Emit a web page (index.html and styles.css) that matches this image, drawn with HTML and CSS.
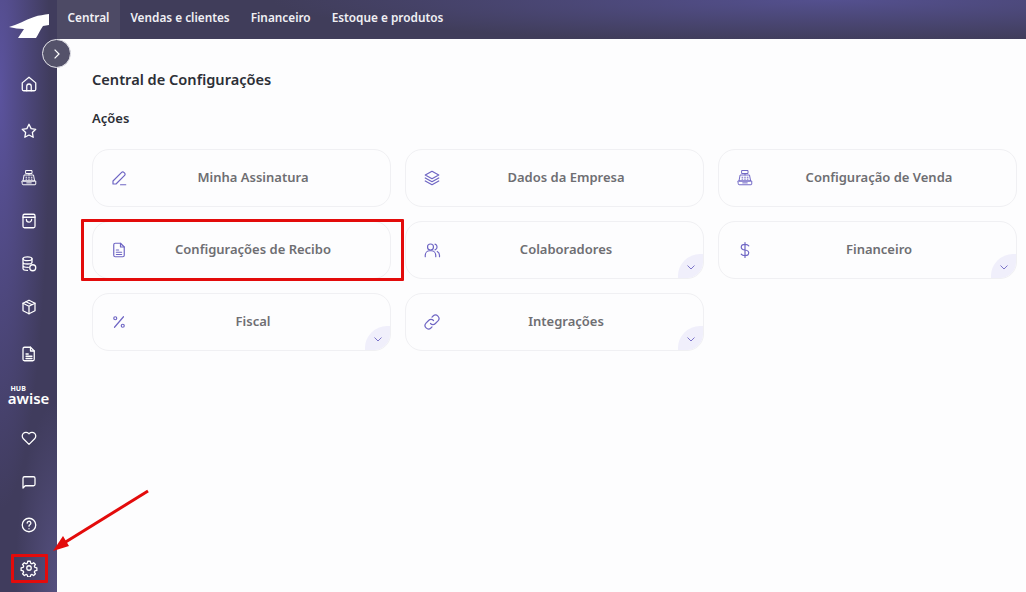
FILE: index.html
```html
<!DOCTYPE html>
<html lang="pt-BR">
<head>
  <meta charset="UTF-8" />
  <title>Central de Configurações</title>
  <link rel="stylesheet" href="styles.css">
</head>
<body>

  <aside class="sidebar">
    <svg class="logo" viewBox="0 0 40 25"><path fill="#fff" d="M0 13 C8 11 16 6 25 3 C30 1 35 1 40 0 L40 11 L34 12 C31 16 29 21 27 24 L9 24 L15 15 C10 15 5 14 0 13 Z"/></svg>
    <nav class="side-icons">
      <a class="side-icon"><svg viewBox="0 0 24 24"><path d="M3 10.500 12 3l9 7.500V19a2 2 0 0 1-2 2H5a2 2 0 0 1-2-2z"/><path d="M9 21v-6a3 3 0 0 1 6 0v6"/></svg></a>
      <a class="side-icon wide"><svg viewBox="0 0 24 24"><path d="m12 3 2.800 5.800 6.200.9-4.500 4.400 1.100 6.300-5.600-3-5.600 3 1.100-6.300L3 9.700l6.200-.9z"/></svg></a>
      <a class="side-icon wide"><svg class="thin" viewBox="0 0 24 24"><path d="M8 2h8v4H8zM12 6v2M6 8h12l1.500 8h-15zM3 16h18v4a1 1 0 0 1-1 1H4a1 1 0 0 1-1-1zM8 11h1M11.500 11h1M15 11h1M8 13.500h1M11.500 13.500h1M15 13.500h1M9 18.500h6"/></svg></a>
      <a class="side-icon"><svg viewBox="0 0 24 24"><rect x="4" y="3" width="16" height="18" rx="2"/><path d="M4 7h16M8.500 10a3.500 3.500 0 0 0 7 0"/></svg></a>
      <a class="side-icon"><svg viewBox="0 0 24 24"><ellipse cx="10" cy="5" rx="6" ry="2.500"/><path d="M4 5v13c0 1.500 3 2.500 6 2.500M16 5v5M4 9.500c0 1.500 3 2.500 6 2.500s6-1 6-2.500M4 14c0 1.500 3 2.500 7 2.500"/><circle cx="17" cy="17" r="4"/></svg></a>
      <a class="side-icon"><svg viewBox="0 0 24 24"><path d="m12 3 8 4v10l-8 4-8-4V7z"/><path d="m4 7 8 4 8-4M12 11v10M8 5l8 4"/></svg></a>
      <a class="side-icon wide"><svg viewBox="0 0 24 24"><path d="M6 3h8l5 5v11a2 2 0 0 1-2 2H6a2 2 0 0 1-2-2V5a2 2 0 0 1 2-2z"/><path d="M14 3v5h5M8 12h3M8 15h8M8 18h8"/></svg></a>
      <a class="hub"><span class="hub-top">HUB</span><span class="hub-name">awise</span></a>
      <a class="side-icon"><svg viewBox="0 0 24 24"><path d="M12 20.500 4.500 13a5 5 0 0 1 7-7.200l.5.500.5-.5a5 5 0 0 1 7 7.200z"/></svg></a>
      <a class="side-icon chat"><svg viewBox="0 0 24 24"><path d="M4 20V7a2 2 0 0 1 2-2h12a2 2 0 0 1 2 2v8a2 2 0 0 1-2 2H7z"/></svg></a>
      <a class="side-icon"><svg viewBox="0 0 24 24"><circle cx="12" cy="12" r="9"/><path d="M9.500 9.500a2.500 2.500 0 1 1 3.700 2.200c-.8.500-1.200 1-1.200 1.800M12 17h.01"/></svg></a>
      <a class="side-icon"><svg viewBox="0 0 24 24"><circle cx="12" cy="12" r="3"/><path d="M10.300 3h3.400l.5 2.600 1.800.8 2.200-1.500 2.400 2.400-1.500 2.200.8 1.800 2.600.5v3.400l-2.600.5-.8 1.800 1.500 2.200-2.400 2.400-2.200-1.500-1.800.8-.5 2.600h-3.400l-.5-2.600-1.800-.8-2.200 1.500-2.400-2.400 1.500-2.200-.8-1.800-2.600-.5v-3.400l2.600-.5.800-1.800-1.500-2.200 2.400-2.400 2.200 1.500 1.800-.8z"/></svg></a>
    </nav>
  </aside>

  <button class="toggle"><svg viewBox="0 0 24 24"><path d="m9 5 7 7-7 7"/></svg></button>

  <div class="content">
    <header class="topbar">
      <a class="tab active">Central</a>
      <a class="tab">Vendas e clientes</a>
      <a class="tab">Financeiro</a>
      <a class="tab">Estoque e produtos</a>
    </header>

    <main class="main">
      <h1>Central de Configurações</h1>
      <h2>Ações</h2>
      <div class="cards">
        <div class="card">
          <svg class="card-icon" viewBox="0 0 24 24"><path d="M4 20v-4L15.500 4.500a2.100 2.100 0 0 1 3 0l1 1a2.100 2.100 0 0 1 0 3L8 20zM14 21h7"/></svg>
          <span class="card-label">Minha Assinatura</span>
        </div>
        <div class="card">
          <svg class="card-icon" viewBox="0 0 24 24"><path d="m12 3 9 5-9 5-9-5zM3 12l9 5 9-5M3 16l9 5 9-5"/></svg>
          <span class="card-label">Dados da Empresa</span>
        </div>
        <div class="card">
          <svg class="card-icon thin" viewBox="0 0 24 24"><path d="M8 2h8v4H8zM12 6v2M6 8h12l1.500 8h-15zM3 16h18v4a1 1 0 0 1-1 1H4a1 1 0 0 1-1-1zM8 11h1M11.500 11h1M15 11h1M8 13.500h1M11.500 13.500h1M15 13.500h1M9 18.500h6"/></svg>
          <span class="card-label">Configuração de Venda</span>
        </div>
        <div class="card">
          <svg class="card-icon" viewBox="0 0 24 24"><path d="M7 3h7l5 5v11a2 2 0 0 1-2 2H7a2 2 0 0 1-2-2V5a2 2 0 0 1 2-2z"/><path d="M14 3v5h5M8.500 12h3M8.500 15h7M8.500 18h7"/></svg>
          <span class="card-label">Configurações de Recibo</span>
        </div>
        <div class="card">
          <svg class="card-icon" viewBox="0 0 24 24"><circle cx="10" cy="8" r="4"/><path d="M3 21v-2a6 6 0 0 1 6-6h2a6 6 0 0 1 6 6v2M16 4.200a4 4 0 0 1 0 7.600M19 14a6 6 0 0 1 3 5v2"/></svg>
          <span class="card-label">Colaboradores</span>
          <span class="corner"><svg viewBox="0 0 24 24"><path d="m5 9 7 7 7-7"/></svg></span>
        </div>
        <div class="card">
          <svg class="card-icon" viewBox="0 0 24 24"><path d="M12 2v20M17 6.500C16 5 14 4.500 12 4.500c-3 0-5 1.500-5 3.700s2 3.300 5 3.800 5 1.600 5 3.800-2 3.700-5 3.700c-2 0-4-.5-5-2"/></svg>
          <span class="card-label">Financeiro</span>
          <span class="corner"><svg viewBox="0 0 24 24"><path d="m5 9 7 7 7-7"/></svg></span>
        </div>
        <div class="card">
          <svg class="card-icon" viewBox="0 0 24 24"><path d="M18 5 6 19"/><circle cx="7" cy="7" r="2"/><circle cx="17" cy="17" r="2"/></svg>
          <span class="card-label">Fiscal</span>
          <span class="corner"><svg viewBox="0 0 24 24"><path d="m5 9 7 7 7-7"/></svg></span>
        </div>
        <div class="card">
          <svg class="card-icon" viewBox="0 0 24 24"><path d="M10 14a4.500 4.500 0 0 0 6.500 0l3.500-3.500A4.600 4.600 0 0 0 13.500 4l-1.500 1.500"/><path d="M14 10a4.500 4.500 0 0 0-6.500 0L4 13.500a4.600 4.600 0 0 0 6.500 6.500l1.500-1.500"/></svg>
          <span class="card-label">Integrações</span>
          <span class="corner"><svg viewBox="0 0 24 24"><path d="m5 9 7 7 7-7"/></svg></span>
        </div>
      </div>
    </main>
  </div>

  <!-- marcacoes do print -->
  <div class="mark mark-card"></div>
  <div class="mark mark-gear"></div>
  <svg class="arrow" viewBox="0 0 1026 592"><path d="M148 491 64 543" stroke="#e30b0b" stroke-width="3" fill="none"/><path d="M53 551 69 546 63 536z" fill="#e30b0b"/></svg>

</body>
</html>
```
FILE: styles.css
```css
* {
  box-sizing: border-box;
}

body {
  margin: 0;
  height: 592px;
  overflow: hidden;
  display: flex;
  background: #fdfdfe;
  font-family: 'Noto Sans', sans-serif;
}

.sidebar {
  width: 57px;
  flex-shrink: 0;
  background:
    radial-gradient(ellipse 50px 420px at 0 90px, #5b539e, transparent),
    radial-gradient(ellipse 42px 190px at 100% 100%, #55507f, transparent),
    #403c5d;
  display: flex;
  flex-direction: column;
  align-items: center;
}

.logo {
  width: 40px;
  height: 25px;
  margin: 14px 0 0 1px;
  flex-shrink: 0;
}

.side-icons {
  display: flex;
  flex-direction: column;
  align-items: center;
  margin-top: 23px;
}

.side-icon {
  width: 44px;
  height: 43px;
  flex-shrink: 0;
  display: flex;
  align-items: center;
  justify-content: center;
}

.side-icon.wide {
  margin-top: 4px;
}

.side-icon.chat {
  margin-top: 1px;
}

.side-icon svg {
  width: 18px;
  height: 18px;
  fill: none;
  stroke: #fff;
  stroke-width: 1.7;
  stroke-linejoin: round;
  stroke-linecap: round;
}

.side-icon svg.thin {
  stroke-width: 1.300;
}

.hub {
  width: 44px;
  height: 38px;
  margin: 3px 0 0;
  padding-bottom: 4px;
  color: #fff;
  display: flex;
  flex-direction: column;
  align-items: center;
  justify-content: center;
}

.hub-top {
  font-size: 7px;
  font-weight: 700;
  align-self: flex-start;
  margin-left: 4px;
  line-height: 7px;
}

.hub-name {
  font-size: 15px;
  font-weight: 600;
  line-height: 13px;
}

.toggle {
  position: absolute;
  left: 42px;
  top: 39px;
  width: 29px;
  height: 29px;
  padding: 6px;
  border-radius: 50%;
  border: 1px solid #e6e6ec;
  background: #54526a;
  display: flex;
}

.toggle svg {
  width: 16px;
  height: 16px;
  fill: none;
  stroke: #fff;
  stroke-width: 2;
}

.content {
  flex: 1;
  display: flex;
  flex-direction: column;
}

.topbar {
  height: 39px;
  display: flex;
  background:
    radial-gradient(ellipse 560px 42px at 80% 0, #54508f, transparent),
    #403d5a;
}

.tab {
  padding: 0 10.500px 5px;
  display: flex;
  align-items: center;
  color: #f0f0f4;
  font-size: 11.800px;
  font-weight: 600;
}

.tab.active {
  background: rgba(255, 255, 255, 0.07);
}

.main {
  padding: 30px 0 0 35px;
}

h1 {
  margin: 0;
  font-size: 14.600px;
  font-weight: 600;
  line-height: 20px;
  color: #2c2f36;
}

h2 {
  margin: 20px 0 0;
  font-size: 13px;
  font-weight: 600;
  line-height: 18px;
  color: #2c2f36;
}

.cards {
  margin-top: 22px;
  display: grid;
  grid-template-columns: repeat(3, 299px);
  column-gap: 14px;
  row-gap: 14px;
}

.card {
  position: relative;
  height: 58px;
  padding: 0 0 2px 23px;
  border: 1px solid #f0f0f3;
  border-radius: 17px;
  background: #fdfdfe;
  display: flex;
  align-items: center;
  justify-content: center;
  overflow: hidden;
}

.card-icon {
  position: absolute;
  left: 17px;
  top: 19px;
  width: 18px;
  height: 18px;
  fill: none;
  stroke: #6f66c4;
  stroke-width: 1.600;
  stroke-linejoin: round;
  stroke-linecap: round;
}

.card-icon.thin {
  stroke-width: 1.300;
}

.card-label {
  color: #6e6e72;
  font-size: 13px;
  font-weight: 600;
}

.corner {
  position: absolute;
  right: -1px;
  bottom: -1px;
  width: 26px;
  height: 25px;
  padding-top: 1px;
  background: #f0effb;
  border-radius: 22px 0 0 0;
  display: flex;
  align-items: center;
  justify-content: center;
}

.corner svg {
  width: 12px;
  height: 12px;
  fill: none;
  stroke: #6f66c4;
  stroke-width: 1.800;
}

.mark {
  position: absolute;
  border: 3px solid #e30b0b;
  border-radius: 1px;
}

.mark-card {
  left: 81px;
  top: 219px;
  width: 323px;
  height: 62px;
}

.mark-gear {
  left: 11px;
  top: 554px;
  width: 37px;
  height: 29px;
}

.arrow {
  position: absolute;
  left: 0;
  top: 0;
  width: 1026px;
  height: 592px;
  pointer-events: none;
}
```
